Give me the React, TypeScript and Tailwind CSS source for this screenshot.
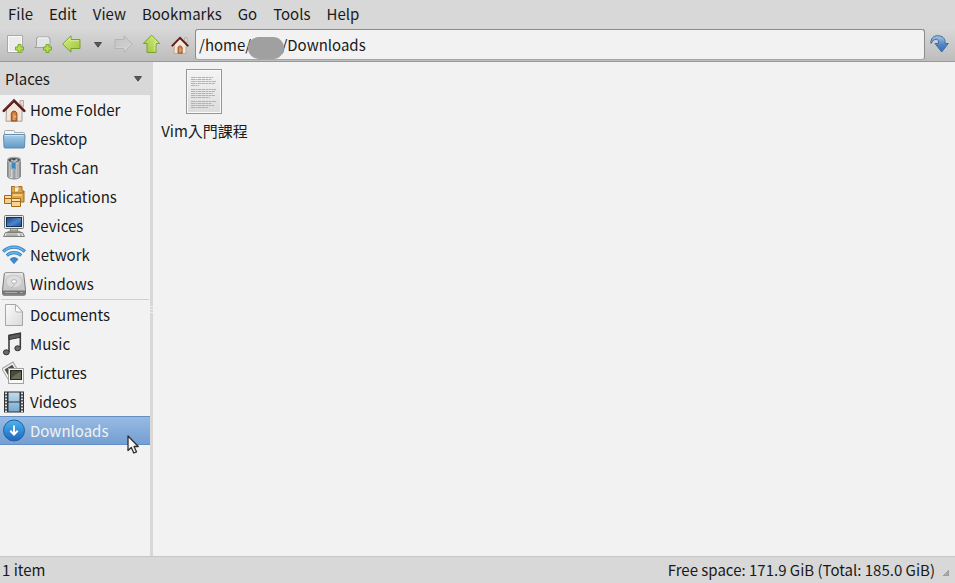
import React from "react";

const HomeIcon = ({ className }: { className: string }) => (
  <svg viewBox="0 0 24 24" className={className} aria-hidden="true">
    <path d="M18 2.5h3.5V9L18 6z" fill="#e6dcd2" stroke="#a99a8c" strokeWidth=".8" />
    <path d="M4.5 11L12 3.5l8 7.5v12.2h-16z" fill="#f2e6da" stroke="#b09a88" />
    <path d="M9.3 23v-7.2c0-1.6 1.2-2.6 2.7-2.6s2.9 1 2.9 2.6V23z" fill="#cc7a3c" stroke="#8f4a1c" />
    <path d="M11 22v-5.5c0-1 2.2-1 2.2 0V22z" fill="#e09a62" />
    <circle cx="13.6" cy="18.6" r=".7" fill="#f5dcb0" />
    <path d="M1.8 12.8L12 2.5l10.3 10.3" fill="none" stroke="#5b1a1a" strokeWidth="2.6" strokeLinecap="round" />
    <path d="M3 10.8L12 2" fill="none" stroke="#8d4040" strokeWidth=".7" />
  </svg>
);

const FolderIcon = () => (
  <svg viewBox="0 0 24 24" className="size-6" aria-hidden="true">
    <defs>
      <linearGradient id="folder" x2="0" y2="1">
        <stop stopColor="#a9cde6" />
        <stop offset="1" stopColor="#5f9bc8" />
      </linearGradient>
    </defs>
    <path d="M2.5 9V4.5q0-1 1-1h8q1 0 1 1v1h9q1 0 1 1V9z" fill="#f4f4f4" stroke="#aaa" />
    <path d="M1.5 8.500q0-1 1-1h19.500q1 0 1 1l-.500 11.500q0 1-1 1H3q-1 0-1-1z" fill="url(#folder)" stroke="#5586ad" strokeWidth=".9" />
    <path d="M2.8 8.6h18.800" stroke="#d1e6f4" strokeWidth=".9" />
  </svg>
);

const TrashIcon = () => (
  <svg viewBox="0 0 24 24" className="size-6" aria-hidden="true">
    <defs>
      <linearGradient id="can">
        <stop stopColor="#77797c" />
        <stop offset=".25" stopColor="#e4e5e6" />
        <stop offset=".5" stopColor="#96999c" />
        <stop offset=".78" stopColor="#d5d6d8" />
        <stop offset="1" stopColor="#6b6d70" />
      </linearGradient>
    </defs>
    <path d="M5.5 4v16.5c1 3.4 12 3.4 13 0V4z" fill="url(#can)" stroke="#7b7d80" strokeWidth=".8" />
    <path d="M8.5 8v13M15.5 8v13" stroke="#8f9295" strokeWidth=".6" />
    <ellipse cx="12" cy="4" rx="6.400" ry="2.600" fill="#4b4e51" stroke="#aaacae" strokeWidth="1.400" />
    <path d="M9 3.200l3 1.400 3-2.200 1 2-3 1.800-4-1z" fill="#b9bcbf" />
    <path d="M9.500 6.500h4v7l-2-1.700-2 1.700z" fill="#3b88be" />
  </svg>
);

const ApplicationsIcon = () => (
  <svg viewBox="0 0 24 24" className="size-6" aria-hidden="true">
    <g stroke="#a66a16" strokeLinejoin="round">
      <path d="M9.500 5.500V1.500h3v1h3l1-1h3.500V6h2v11H9.500z" fill="#e0a84c" />
      <path d="M12.500 2h5l-1 5h-4z" fill="#fbefcb" stroke="#c89440" />
      <path d="M9.500 8h11.500l1-2" fill="none" />
      <path d="M2.500 10.500h7v8h-7z" fill="#f2cf8c" />
      <path d="M2.500 13.500h7" />
      <path d="M9.500 13.500h9v8h-9z" fill="#f5d597" />
      <path d="M9.500 16.500h9" />
    </g>
    <path d="M3.400 11.900h5.200M10.400 15h7.200M11 10h9" stroke="#ffedc0" />
  </svg>
);

const DevicesIcon = () => (
  <svg viewBox="0 0 24 24" className="size-6" aria-hidden="true">
    <defs>
      <linearGradient id="screen" x2="1" y2="1">
        <stop stopColor="#163e7e" />
        <stop offset=".55" stopColor="#4f86c8" />
        <stop offset="1" stopColor="#1c4a8f" />
      </linearGradient>
    </defs>
    <path d="M9 14h6l1 3H8z" fill="#bdbeba" stroke="#73756f" strokeWidth=".8" />
    <rect x="2.5" y="1.5" width="19" height="13" rx="1" fill="#e6e7e3" stroke="#72746e" />
    <rect x="4.5" y="3.5" width="15" height="9" fill="url(#screen)" stroke="#15305e" />
    <path d="M5.5 17.5h13" stroke="#92948e" />
    <path d="M3.5 18.5h17l2 4h-21z" fill="#e4e5e0" stroke="#7e807a" strokeLinejoin="round" />
    <path d="M4.5 20h11M4 21.3h12M17.5 20h2M18 21.3h2" stroke="#8d8f89" strokeWidth=".8" />
  </svg>
);

const NetworkIcon = () => (
  <svg viewBox="0 0 24 24" className="size-6" aria-hidden="true">
    <g fill="none" stroke="#2d79bd" strokeWidth="3.200">
      <path d="M1.200 8.500c6-5.800 15.600-5.800 21.600 0" />
      <path d="M4.800 12.500c4-3.900 10.400-3.900 14.400 0" />
    </g>
    <g fill="none" stroke="#69b2e7" strokeWidth="1.800">
      <path d="M1.700 8.200c5.900-5.400 14.700-5.400 20.600 0" />
      <path d="M5.300 12.100c3.900-3.500 9.500-3.500 13.400 0" />
    </g>
    <path d="M8 16.300c2.200-2.300 5.800-2.300 8 0L12 20.700z" fill="#3a88cf" stroke="#2a6fb4" strokeWidth=".6" />
  </svg>
);

const DriveIcon = () => (
  <svg viewBox="0 0 24 24" className="size-6" aria-hidden="true">
    <defs>
      <linearGradient id="drive" x2="0" y2="1">
        <stop stopColor="#e0e0e0" />
        <stop offset="1" stopColor="#bdbdbd" />
      </linearGradient>
    </defs>
    <path d="M3.500.800h17q1 0 1.200 1l1.800 16v4q0 1.500-1.500 1.500H2Q.500 23.300.500 21.800v-4l1.800-16q.2-1 1.200-1z" fill="url(#drive)" stroke="#777" />
    <path d="M1 18.500h22v3.300q0 1-1 1H2q-1 0-1-1z" fill="#767676" />
    <path d="M3 20.500h12M18 20.500h3" stroke="#aaa" />
    <ellipse cx="12" cy="9.500" rx="8.300" ry="6.500" fill="#dcdcdc" stroke="#c2c2c2" />
    <ellipse cx="12" cy="9.500" rx="2.500" ry="2" fill="#f5f5f5" stroke="#b5b5b5" />
    <path d="M8.500 16.500l4-4" stroke="#b0b0b0" />
    <path d="M3 1.800h18" stroke="#fff" strokeWidth=".8" />
  </svg>
);

const DocumentIcon = () => (
  <svg viewBox="0 0 24 24" className="size-6" aria-hidden="true">
    <defs>
      <linearGradient id="sheet" x2="1" y2="1">
        <stop stopColor="#fcfcfc" />
        <stop offset="1" stopColor="#d9d9d9" />
      </linearGradient>
    </defs>
    <path d="M3.500 1.500h10.500l6.500 7v14h-17z" fill="url(#sheet)" stroke="#a6a6a6" strokeLinejoin="round" />
    <path d="M13.500 1.500v6q0 1.500 1.500 1.500h5.500z" fill="#fff" stroke="#aeaeae" strokeLinejoin="round" />
  </svg>
);

const MusicIcon = () => (
  <svg viewBox="0 0 24 24" className="size-6" aria-hidden="true">
    <path d="M7 20V3.500L18.300 1.300V16" fill="none" stroke="#3d3d3d" strokeWidth="1.600" />
    <path d="M7 3.500l11.300-2.200v4L7 7.600z" fill="#5c5c5c" stroke="#333" />
    <ellipse cx="4.300" cy="20.300" rx="2.900" ry="2.500" fill="#6b6b6b" stroke="#333" />
    <ellipse cx="15.700" cy="16.300" rx="2.900" ry="2.500" fill="#6b6b6b" stroke="#333" />
  </svg>
);

const PicturesIcon = () => (
  <svg viewBox="0 0 24 24" className="size-6" aria-hidden="true">
    <g transform="rotate(-31 8.500 9.500)">
      <rect x="2" y="3.500" width="13" height="13" fill="#f4f4f4" stroke="#a2a2a2" />
      <rect x="4" y="5.500" width="9" height="8" fill="#4c5140" />
    </g>
    <rect x="6.500" y="7.500" width="15" height="15" fill="#f8f8f8" stroke="#a2a2a2" />
    <rect x="8.500" y="9.500" width="11" height="9" fill="#484d3b" stroke="#25281e" />
    <path d="M9 18c3-4 6-6 10-7v7z" fill="#686e59" />
  </svg>
);

const VideosIcon = () => (
  <svg viewBox="0 0 24 24" className="size-6" aria-hidden="true">
    <defs>
      <linearGradient id="frame" x2="0" y2="1">
        <stop stopColor="#c3dcec" />
        <stop offset="1" stopColor="#74aacd" />
      </linearGradient>
    </defs>
    <rect x="2" y="1.500" width="20" height="21" fill="#30353a" />
    <path d="M6.500 2.500h11v9h-11zM6.500 12.500h11v9h-11z" fill="url(#frame)" />
    <path d="M4 2.500v20M20 2.500v20" stroke="#dbdbdb" strokeWidth="2" strokeDasharray="1.700 1.300" />
  </svg>
);

const DownloadsIcon = () => (
  <svg viewBox="0 0 24 24" className="size-6" aria-hidden="true">
    <defs>
      <linearGradient id="disc" x2="0" y2="1">
        <stop stopColor="#4bb5ef" />
        <stop offset="1" stopColor="#1d65bf" />
      </linearGradient>
    </defs>
    <circle cx="12" cy="11.500" r="10.500" fill="url(#disc)" stroke="#255f9d" />
    <path d="M12 6.500v9M8.300 11.700l3.700 3.800 3.700-3.800" fill="none" stroke="#fff" strokeWidth="2" />
  </svg>
);

const Plus = () => (
  <path
    d="M12 9.500h3V12h2.500v3H15v2.500h-3V15H9.500v-3H12z"
    fill="#b5db4e"
    stroke="#7aa632"
    strokeLinejoin="round"
  />
);

const NewFileIcon = () => (
  <svg viewBox="0 0 20 20" className="size-5" aria-hidden="true">
    <path d="M1.500.500h15v17h-15z" fill="#ececec" stroke="#a8a8a8" />
    <path d="M2.500 1.500h13v15h-13z" fill="none" stroke="#fafafa" />
    <Plus />
  </svg>
);

const NewTabIcon = () => (
  <svg viewBox="0 0 20 20" className="size-5" aria-hidden="true">
    <path
      d="M.500 12.500q2-.300 2-2V4q0-2 2-2h9.500q2 0 2 2v6.500q0 1.700 2 2z"
      fill="#e4e4e4"
      stroke="#a2a2a2"
    />
    <path d="M4.500 3h9.500" stroke="#fafafa" />
    <Plus />
  </svg>
);

const ArrowIcon = ({ direction }: { direction: "back" | "forward" | "up" }) => {
  const turn = { back: 0, forward: 180, up: 90 }[direction];
  const off = direction === "forward";
  return (
    <svg viewBox="0 0 20 20" className="size-5" aria-hidden="true">
      <defs>
        <linearGradient id={`arrow-${direction}`} x2="1" y2="1">
          <stop stopColor={off ? "#d2d2d2" : "#d8ef86"} />
          <stop offset="1" stopColor={off ? "#c4c4c4" : "#9cc436"} />
        </linearGradient>
      </defs>
      <g transform={`rotate(${turn} 9.500 9)`}>
        <path
          d="M.700 9L9 .800V4.500H18v9H9v3.700z"
          fill={`url(#arrow-${direction})`}
          stroke={off ? "#b4b4b4" : "#76a22e"}
          strokeLinejoin="round"
        />
        <path d="M2.300 8.700L8.200 3V5.600h8.700" fill="none" stroke={off ? "#dadada" : "#e4f5a8"} strokeWidth=".7" />
      </g>
    </svg>
  );
};

const CaretIcon = () => (
  <svg viewBox="0 0 10 6" className="h-1.5 w-2.5" aria-hidden="true">
    <path d="M1.500.500h7L5 5.200z" fill="#5a5a5a" stroke="#3c3c3c" strokeWidth=".8" strokeLinejoin="round" />
  </svg>
);

const JumpIcon = () => (
  <svg viewBox="0 0 20 20" className="size-5" aria-hidden="true">
    <defs>
      <linearGradient id="jump" x2="0" y2="1">
        <stop stopColor="#a5c4e5" />
        <stop offset=".6" stopColor="#4c82c2" />
        <stop offset="1" stopColor="#3b70b3" />
      </linearGradient>
    </defs>
    <path
      d="M1 8.500C.500 3.200 3.800.700 7.500.700c4.800 0 7.500 2.600 7.500 6V8.500h3.300L11.700 17 5 8.500h3.500V7c0-1.800-.700-2.700-2.200-2.700C4 4.300 2.700 5.800 1 8.500z"
      fill="url(#jump)"
      stroke="#3d6da3"
      strokeLinejoin="round"
    />
  </svg>
);

const FilePreviewIcon = () => (
  <svg viewBox="0 0 36 46" className="h-[46px] w-9" aria-hidden="true">
    <defs>
      <linearGradient id="page" x2="0" y2="1">
        <stop stopColor="#f4f4f4" />
        <stop offset="1" stopColor="#dcdcdc" />
      </linearGradient>
    </defs>
    <rect x=".500" y=".500" width="35" height="44" fill="url(#page)" stroke="#969696" />
    <rect x="1.500" y="1.500" width="33" height="42" fill="none" stroke="#fafafa" />
    <path
      d="M5 8.500h22M5 10.500h21M5 12.500h25M5 14.500h24M5 16.500h8M5 20.500h25M5 22.500h24M5 24.500h22M5 26.500h24M5 28.500h19M5 32.500h25M5 34.500h21M5 36.500h23M5 38.500h17"
      stroke="#b2b2b2"
      strokeDasharray="4 .5 2 .5 3 .5"
    />
  </svg>
);

const menus = ["File", "Edit", "View", "Bookmarks", "Go", "Tools", "Help"];

const places = [
  { name: "Home Folder", icon: <HomeIcon className="size-6" /> },
  { name: "Desktop", icon: <FolderIcon /> },
  { name: "Trash Can", icon: <TrashIcon /> },
  { name: "Applications", icon: <ApplicationsIcon /> },
  { name: "Devices", icon: <DevicesIcon /> },
  { name: "Network", icon: <NetworkIcon /> },
  { name: "Windows", icon: <DriveIcon /> },
];

const bookmarks = [
  { name: "Documents", icon: <DocumentIcon /> },
  { name: "Music", icon: <MusicIcon /> },
  { name: "Pictures", icon: <PicturesIcon /> },
  { name: "Videos", icon: <VideosIcon /> },
];

const rowClass = "flex h-[29px] w-full items-center gap-1 pl-0.5 text-left";

const ToolButton = ({ label, children, disabled }: { label: string; children: React.ReactNode; disabled?: boolean }) => (
  <button type="button" aria-label={label} disabled={disabled} className="flex w-7 items-center justify-center">
    {children}
  </button>
);

export default function App() {
  return (
    <div className="flex min-h-screen flex-col bg-[#d8d8d8] font-['Noto_Sans_CJK_TC',sans-serif] text-[15px] leading-5 text-[#1a1a1a]">
      <nav className="flex h-7 items-center">
        {menus.map((menu) => (
          <button key={menu} type="button" className="px-2">
            {menu}
          </button>
        ))}
      </nav>

      <div className="flex h-[34px] border-b border-[#999] bg-linear-to-b from-[#d8d8d8] to-[#bdbdbd] pt-px pl-0.5">
        <ToolButton label="New file">
          <NewFileIcon />
        </ToolButton>
        <ToolButton label="New tab">
          <NewTabIcon />
        </ToolButton>
        <ToolButton label="Back">
          <ArrowIcon direction="back" />
        </ToolButton>
        <button type="button" aria-label="History" className="flex w-6 items-center justify-center">
          <CaretIcon />
        </button>
        <ToolButton label="Forward" disabled>
          <ArrowIcon direction="forward" />
        </ToolButton>
        <ToolButton label="Up">
          <ArrowIcon direction="up" />
        </ToolButton>
        <ToolButton label="Home">
          <HomeIcon className="size-[18px]" />
        </ToolButton>
        <div className="relative ml-px flex-1">
          <input
            type="text"
            aria-label="Location"
            defaultValue="/home/         /Downloads"
            className="block h-[31px] w-full rounded-[3px] border border-[#8c8c8c] border-b-[#a5a5a5] bg-[#f2f2f2] px-[3px] outline-none"
          />
          {/* covers the user name */}
          <span className="absolute top-2 left-[53px] h-[22px] w-9 rounded-full bg-[#a0a0a0]" />
        </div>
        <button type="button" aria-label="Jump to" className="flex w-[30px] items-center justify-center">
          <JumpIcon />
        </button>
      </div>

      <div className="flex flex-1 bg-[#f2f2f2]">
        <aside className="w-[150px]">
          <button type="button" className="flex h-[33px] w-full items-center justify-between bg-[#d8d8d8] pr-[7px] pl-[5px]">
            Places
            <CaretIcon />
          </button>
          <ul>
            {places.map((place) => (
              <li key={place.name}>
                <button type="button" className={rowClass}>
                  {place.icon}
                  {place.name}
                </button>
              </li>
            ))}
          </ul>
          <hr className="mx-px mt-px border-[#d0d0d0]" />
          <ul>
            {bookmarks.map((bookmark) => (
              <li key={bookmark.name}>
                <button type="button" className={rowClass}>
                  {bookmark.icon}
                  {bookmark.name}
                </button>
              </li>
            ))}
            <li className="relative">
              <button
                type="button"
                className="flex h-[29px] w-full items-center gap-1 border-y border-[#648fc5] bg-linear-to-b from-[#98bae2] to-[#739fd2] pl-0.5 text-left text-[#f2f2f2]"
              >
                <DownloadsIcon />
                Downloads
              </button>
              <svg viewBox="0 0 12 19" className="absolute top-[19px] left-[127px] h-[19px] w-3" aria-hidden="true">
                <path
                  d="M1 1v14.500l3.300-3 2.500 5.500 2.700-1.200L7 11.500h4.300z"
                  fill="#f6f6f6"
                  stroke="#2e2e2e"
                  strokeWidth="1.300"
                  strokeLinejoin="round"
                />
              </svg>
            </li>
          </ul>
        </aside>

        <div className="flex w-[3px] flex-col items-center justify-center gap-0.5 bg-[#d8d8d8]">
          <span className="h-px w-full bg-[#ececec]" />
          <span className="h-px w-full bg-[#ececec]" />
          <span className="h-px w-full bg-[#ececec]" />
        </div>

        <main className="flex-1 pt-[7px]">
          <button type="button" className="flex w-[101px] flex-col items-center gap-1.5">
            <FilePreviewIcon />
            <span className="pl-0.5">Vim入門課程</span>
          </button>
        </main>
      </div>

      <footer className="flex h-[27px] items-center justify-between border-t border-[#c6c6c6] pr-1.5 pl-0.5">
        <span>1 item</span>
        <span className="flex items-center gap-2">
          Free space: 171.9 GiB (Total: 185.0 GiB)
          <svg viewBox="0 0 6 6" className="mt-1.5 size-1.5" aria-hidden="true">
            <path d="M6 0v6H0z" fill="#a8a8a8" stroke="#888" strokeWidth=".600" />
          </svg>
        </span>
      </footer>
    </div>
  );
}
